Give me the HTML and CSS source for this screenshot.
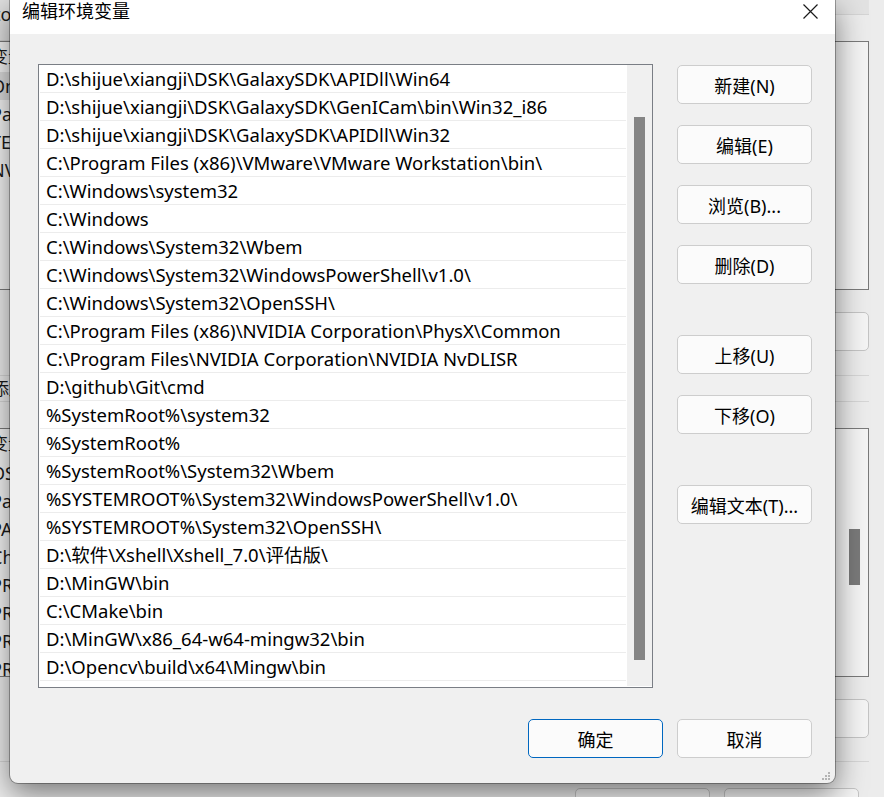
FILE: index.html
```html
<!DOCTYPE html>
<html lang="zh-CN">
<head>
    <meta charset="UTF-8">
    <title>编辑环境变量</title>
    <link rel="stylesheet" href="styles.css">
</head>
<body>
    <div class="desktop">
        <!-- window behind: 环境变量 (only its edges show) -->
        <div class="back-window">
            <div class="bw-head">
                <div class="bw-tab">tor</div>
                <div class="bw-strip"></div>
            </div>
            <div class="bw-list">
                <div class="bw-list-head">变量</div>
                <div class="bw-row selected">On</div>
                <div class="bw-row">Pat</div>
                <div class="bw-row">TE</div>
                <div class="bw-row">NV</div>
            </div>
            <div class="bw-buttons">
                <div class="bw-btn"></div>
            </div>
            <div class="bw-section">添加</div>
            <div class="bw-list">
                <div class="bw-list-head">变量</div>
                <div class="bw-row">OS</div>
                <div class="bw-row">Pat</div>
                <div class="bw-row">PA</div>
                <div class="bw-row">Ch</div>
                <div class="bw-row">PR</div>
                <div class="bw-row">PR</div>
                <div class="bw-row">PR</div>
                <div class="bw-row">PR</div>
                <div class="bw-thumb"></div>
            </div>
            <div class="bw-buttons">
                <div class="bw-btn"></div>
            </div>
            <div class="bw-footer">
                <div class="bw-btn"></div>
                <div class="bw-btn"></div>
            </div>
        </div>

        <!-- active dialog -->
        <div class="dialog">
            <div class="titlebar">
                <span class="title">编辑环境变量</span>
                <span class="close">
                    <svg width="15" height="15" viewBox="0 0 15 15">
                        <path d="M0.5 0.5 L14.5 14.5 M14.5 0.5 L0.5 14.5" stroke="#1a1a1a" stroke-width="1.2" fill="none"/>
                    </svg>
                </span>
            </div>

            <div class="dialog-body">
                <div class="main">
                    <div class="path-list">
                        <ul class="rows">
                            <li>D:\shijue\xiangji\DSK\GalaxySDK\APIDll\Win64</li>
                            <li>D:\shijue\xiangji\DSK\GalaxySDK\GenICam\bin\Win32_i86</li>
                            <li>D:\shijue\xiangji\DSK\GalaxySDK\APIDll\Win32</li>
                            <li>C:\Program Files (x86)\VMware\VMware Workstation\bin\</li>
                            <li>C:\Windows\system32</li>
                            <li>C:\Windows</li>
                            <li>C:\Windows\System32\Wbem</li>
                            <li>C:\Windows\System32\WindowsPowerShell\v1.0\</li>
                            <li>C:\Windows\System32\OpenSSH\</li>
                            <li>C:\Program Files (x86)\NVIDIA Corporation\PhysX\Common</li>
                            <li>C:\Program Files\NVIDIA Corporation\NVIDIA NvDLISR</li>
                            <li>D:\github\Git\cmd</li>
                            <li>%SystemRoot%\system32</li>
                            <li>%SystemRoot%</li>
                            <li>%SystemRoot%\System32\Wbem</li>
                            <li>%SYSTEMROOT%\System32\WindowsPowerShell\v1.0\</li>
                            <li>%SYSTEMROOT%\System32\OpenSSH\</li>
                            <li>D:\软件\Xshell\Xshell_7.0\评估版\</li>
                            <li>D:\MinGW\bin</li>
                            <li>C:\CMake\bin</li>
                            <li>D:\MinGW\x86_64-w64-mingw32\bin</li>
                            <li>D:\Opencv\build\x64\Mingw\bin</li>
                        </ul>
                        <div class="scrollbar">
                            <div class="thumb"></div>
                        </div>
                    </div>

                    <div class="side-buttons">
                        <button class="btn">新建(N)</button>
                        <button class="btn">编辑(E)</button>
                        <button class="btn">浏览(B)...</button>
                        <button class="btn">删除(D)</button>
                        <button class="btn spaced">上移(U)</button>
                        <button class="btn">下移(O)</button>
                        <button class="btn spaced">编辑文本(T)...</button>
                    </div>
                </div>

                <div class="footer">
                    <button class="btn primary">确定</button>
                    <button class="btn">取消</button>
                </div>
            </div>

            <svg class="grip" width="10" height="10" viewBox="0 0 10 10">
                <rect x="7" y="1" width="2" height="2" fill="#b4b4b4"/>
                <rect x="4" y="4" width="2" height="2" fill="#b4b4b4"/>
                <rect x="7" y="4" width="2" height="2" fill="#b4b4b4"/>
                <rect x="1" y="7" width="2" height="2" fill="#b4b4b4"/>
                <rect x="4" y="7" width="2" height="2" fill="#b4b4b4"/>
                <rect x="7" y="7" width="2" height="2" fill="#b4b4b4"/>
            </svg>
        </div>
    </div>
</body>
</html>
```

FILE: styles.css
```css
* {
    margin: 0;
    padding: 0;
    box-sizing: border-box;
}

body {
    font-family: 'Noto Sans', 'Noto Sans CJK SC', sans-serif;
    font-size: 18px;
    color: #000;
    background: #ececec;
    overflow: hidden;
}

.desktop {
    position: relative;
    width: 884px;
    height: 797px;
    overflow: hidden;
}

/* ---------- window behind ---------- */

.back-window {
    position: absolute;
    top: 0;
    left: -30px;
    width: 914px;
    height: 797px;
    padding-right: 15px;
    background: #ececec;
    display: flex;
    flex-direction: column;
    overflow: hidden;
    color: #1a1a1a;
}

.back-window > * {
    flex-shrink: 0;
}

.bw-head {
    height: 41px;
    display: flex;
    align-items: flex-start;
}

.bw-tab {
    width: 40px;
    height: 41px;
    background: #e0e0e0;
    border-bottom: 1px solid #cfcfcf;
    line-height: 28px;
    white-space: nowrap;
    overflow: hidden;
    text-indent: 24px;
}

.bw-strip {
    flex: 1;
    height: 15px;
    background: #e2e2e2;
    border-bottom: 1px solid #d4d4d4;
}

.bw-list {
    position: relative;
    height: 249px;
    border: 1px solid #7a7a7a;
    background: #f4f4f4;
    overflow: hidden;
}

.bw-list-head {
    width: 40px;
    height: 30px;
    line-height: 30px;
    padding-left: 20px;
    white-space: nowrap;
    overflow: hidden;
    font-size: 17px;
}

.bw-row {
    width: 40px;
    height: 28px;
    line-height: 28px;
    padding-left: 20px;
    white-space: nowrap;
    overflow: hidden;
}

.bw-row.selected {
    background: #dcdcdc;
}

.bw-thumb {
    position: absolute;
    top: 100px;
    right: 8px;
    width: 11px;
    height: 56px;
    background: #7a7a7a;
}

.bw-buttons {
    display: flex;
    justify-content: flex-end;
    margin-top: 22px;
}

.bw-btn {
    width: 135px;
    height: 39px;
    border: 1px solid #c4c4c4;
    border-radius: 5px;
    background: #f4f4f4;
}

.bw-section {
    margin-top: 24px;
    height: 27px;
    line-height: 26px;
    border-top: 1px solid #d6d6d6;
    border-bottom: 1px solid #d6d6d6;
    padding-left: 22px;
    margin-bottom: 26px;
    width: 100%;
    white-space: nowrap;
    font-size: 17px;
}

.bw-footer {
    display: flex;
    gap: 14px;
    margin-top: 23px;
    padding-top: 26px;
    padding-left: 605px;
    border-top: 1px solid #d6d6d6;
}

/* ---------- active dialog ---------- */

.dialog {
    position: absolute;
    top: 0;
    left: 10px;
    width: 825px;
    height: 783px;
    background: #f0f0f0;
    border-radius: 0 0 8px 8px;
    box-shadow: 0 0 0 1px rgba(0, 0, 0, 0.3), 0 10px 30px rgba(0, 0, 0, 0.5);
    display: flex;
    flex-direction: column;
}

.titlebar {
    height: 34px;
    background: #fff;
    display: flex;
    justify-content: space-between;
    padding: 0 17px 0 12px;
}

.title {
    font-size: 18px;
    line-height: 22px;
}

.close {
    display: flex;
    padding-top: 4px;
}

.dialog-body {
    flex: 1;
    padding: 30px 23px 0 28px;
    display: flex;
    flex-direction: column;
}

.main {
    display: flex;
    gap: 24px;
}

.path-list {
    width: 616px;
    height: 624px;
    border: 1px solid #7a7e85;
    background: #fff;
    display: flex;
    padding: 0 0 0 1px;
}

.rows {
    list-style: none;
    width: 587px;
    padding-right: 1px;
}

.rows li {
    height: 28px;
    line-height: 26px;
    padding: 1px 0 0 6px;
    font-size: 18.5px;
    border-bottom: 1px solid #ececec;
    white-space: nowrap;
    overflow: hidden;
}

.scrollbar {
    flex: 1;
    background: #f0f0f0;
    margin-bottom: 1px;
    padding: 52px 0 26px 7px;
}

.thumb {
    width: 11px;
    height: 543px;
    background: #858585;
}

.side-buttons {
    width: 135px;
    display: flex;
    flex-direction: column;
    gap: 21px;
    padding-top: 1px;
}

.btn {
    font-family: inherit;
    font-size: 18px;
    color: #000;
    height: 39px;
    width: 135px;
    background: #fbfbfb;
    border: 1px solid #cdcdcd;
    border-radius: 5px;
}

.btn.spaced {
    margin-top: 30px;
}

.btn.primary {
    border-color: #0067c0;
}

.footer {
    display: flex;
    justify-content: flex-end;
    gap: 14px;
    margin-top: 31px;
}

.grip {
    position: absolute;
    right: 4px;
    bottom: 2px;
}
```
